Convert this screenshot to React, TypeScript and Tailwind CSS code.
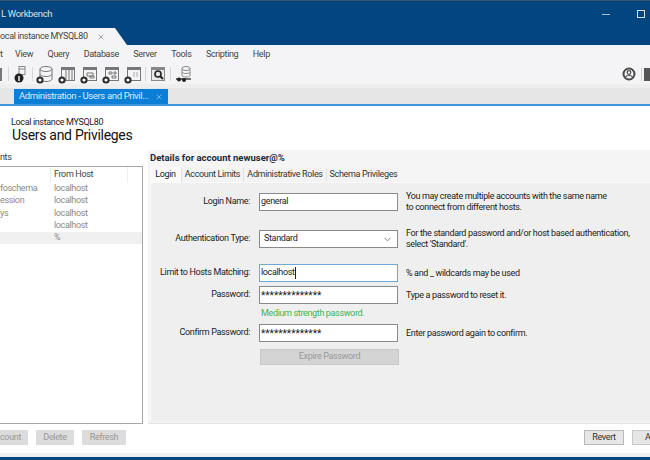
import { ReactNode } from "react";
import { X, ChevronDown } from "lucide-react";

const menus = ["View", "Query", "Database", "Server", "Tools", "Scripting", "Help"];

const users = [
  { name: "foschema", host: "localhost" },
  { name: "ession", host: "localhost" },
  { name: "ys", host: "localhost" },
  { name: "", host: "localhost" },
  { name: "", host: "%", selected: true },
];

const detailTabs = [
  { label: "Account Limits", width: "w-[62px]" },
  { label: "Administrative Roles", width: "w-[83px]" },
  { label: "Schema Privileges", width: "w-[74px]" },
];

function Dot() {
  return <circle cx="4" cy="16" r="2.6" fill="#fff" stroke="#2b2b2b" strokeWidth="2" />;
}

function DbIcon() {
  return (
    <svg width="18" height="20" viewBox="0 0 18 20" fill="none" stroke="#777">
      <ellipse cx="10" cy="5" rx="6" ry="2.5" />
      <path d="M4 5v10c0 1.500 3 2.500 6 2.500s6-1 6-2.500V5M4 10c0 1.500 3 2.500 6 2.500s6-1 6-2.500" />
      <Dot />
    </svg>
  );
}

function SheetIcon({ children }: { children: ReactNode }) {
  return (
    <svg width="18" height="20" viewBox="0 0 18 20" fill="none" stroke="#777">
      <rect x="3.500" y="3.500" width="13" height="13" fill="#f4f4f6" />
      <path d="M3.500 5h13" strokeWidth="2" />
      {children}
      <Dot />
    </svg>
  );
}

function Sep() {
  return <div className="w-px h-[14px] bg-[#d6d6d6]" />;
}

function Toolbar() {
  return (
    <div className="h-[20px] flex items-center">
      <div className="w-[2px] h-[13px] bg-[#777] mr-[6px]" />
      <Sep />
      <svg className="ml-[4px]" width="16" height="20" viewBox="0 0 16 20" fill="none" stroke="#888">
        <rect x="6" y="2.500" width="6" height="8" />
        <path d="M6 5h6" />
        <circle cx="6" cy="14" r="4.500" fill="#222" stroke="none" />
        <path d="M6 12v5" stroke="#fff" strokeWidth="1.400" />
      </svg>
      <div className="ml-[3px]"><Sep /></div>
      <div className="ml-[3px]"><DbIcon /></div>
      <div className="ml-[4px]">
        <SheetIcon><path d="M8 6v10M11 6v10M14 6v10" /></SheetIcon>
      </div>
      <div className="ml-[4px]">
        <SheetIcon><path d="M7 9h6v3H7zM10 12h4v2h-4z" /></SheetIcon>
      </div>
      <div className="ml-[4px]">
        <SheetIcon><path d="M7 8h3v2H7zM12 8h2v2h-2zM10 12h4v2h-4z" /></SheetIcon>
      </div>
      <div className="ml-[4px]">
        <SheetIcon><path d="M10 8v5M13 8v5" stroke="#aaa" /></SheetIcon>
      </div>
      <div className="ml-[3px]"><Sep /></div>
      <svg className="ml-[3px]" width="18" height="20" viewBox="0 0 18 20" fill="none" stroke="#888">
        <rect x="2.500" y="3.500" width="13" height="13" fill="#e8e8e8" />
        <path d="M2.500 5h13" strokeWidth="2" />
        <circle cx="9" cy="10" r="3" stroke="#222" strokeWidth="1.600" />
        <path d="M11 12l3 3" stroke="#222" strokeWidth="2" />
      </svg>
      <div className="ml-[3px]"><Sep /></div>
      <svg className="ml-[3px]" width="20" height="20" viewBox="0 0 20 20" fill="none" stroke="#888">
        <ellipse cx="12" cy="4.500" rx="4" ry="2" />
        <path d="M8 4.500v7c0 1 2 1.500 4 1.500s4-.5 4-1.500v-7M8 8c0 1 2 1.500 4 1.500s4-.5 4-1.500" />
        <path d="M2 15h15" stroke="#333" strokeWidth="1.400" />
        <circle cx="5" cy="15.500" r="2" fill="#222" stroke="none" />
        <circle cx="10" cy="16" r="2" fill="#222" stroke="none" />
      </svg>
      <div className="ml-auto flex items-center">
        <svg width="14" height="14" viewBox="0 0 14 14" fill="none">
          <circle cx="7" cy="7" r="5.500" stroke="#4a4a4a" strokeWidth="2" />
          <circle cx="7" cy="5.500" r="1.800" stroke="#4a4a4a" strokeWidth="1.200" />
          <path d="M3.500 10c1-2 6-2 7 0" stroke="#4a4a4a" strokeWidth="1.200" />
        </svg>
        <div className="ml-[5px] w-px h-[13px] bg-[#d0d0d0]" />
        <div className="ml-[2px] w-[6px] h-[13px] bg-[#555]" />
      </div>
    </div>
  );
}

function FormRow({ label, children, help, className }: { label?: string; children: ReactNode; help?: ReactNode; className?: string }) {
  return (
    <div className={`flex items-center ${className ?? ""}`}>
      <div className="w-[99px] shrink-0 text-right text-[#222]">{label}</div>
      <div className="w-[139px] shrink-0 ml-[9px]">{children}</div>
      <div className="ml-[8px] shrink-0 text-[#222] leading-[11px]">{help}</div>
    </div>
  );
}

function Field({ value, focused, masked }: { value: string; focused?: boolean; masked?: boolean }) {
  return (
    <div className={`h-[18px] bg-white border px-[1px] flex items-center text-[#222] ${focused ? "border-[#6fa8d6]" : "border-[#8a8a8a]"} ${masked ? "text-[10px] tracking-normal" : ""}`}>
      {value}
      {focused && <span className="w-px h-[12px] bg-[#222]" />}
    </div>
  );
}

export default function App() {
  return (
    <div className="w-[650px] h-[460px] overflow-hidden flex flex-col bg-white text-[9px] tracking-[-0.35px] font-['Roboto','Liberation_Sans',sans-serif] whitespace-nowrap">
      <div className="h-[27px] shrink-0 bg-[#03457f] border-t border-[#39546f] flex items-center text-[#d6e2ee] text-[9.5px] pl-[1px]">
        L Workbench
        <div className="ml-auto w-[8px] h-px bg-[#a9c0d6]" />
        <div className="ml-[27px] mr-[5px] w-[8px] h-[8px] border border-[#d6e2ee]" />
      </div>
      <div className="h-[18px] shrink-0 bg-[#03457f] flex items-end">
        <div className="w-[127px] h-[17px] bg-[#f4f4f6] [clip-path:polygon(0_0,115px_0,127px_100%,0_100%)] flex items-center text-[#444]">
          ocal instance MYSQL80
          <X size={8} className="ml-[9px] text-[#777]" />
        </div>
      </div>
      <div className="h-[19px] shrink-0 bg-[#f4f4f6] flex items-center text-[#444]">
        <span className="w-[15px]">t</span>
        <div className="flex gap-[14.5px]">
          {menus.map((m) => (
            <span key={m}>{m}</span>
          ))}
        </div>
      </div>
      <div className="shrink-0 bg-[#f4f4f6]">
        <Toolbar />
      </div>
      <div className="h-[22px] shrink-0 bg-[#e6e6e6] border-t-[4px] border-[#eeeeee] border-b-[2px] border-b-[#3d94d9] flex items-end pl-[14px]">
        <div className="w-[154px] h-[15px] bg-[#0b7fd6] text-[#d8ecfb] text-[9.5px] flex items-center pl-[5px]">
          Administration - Users and Privil...
          <X size={8} className="ml-auto mr-[5px] text-[#a8d0f0]" />
        </div>
      </div>
      <div className="shrink-0 h-[44px] pl-[11px] pt-[10px]">
        <div className="leading-[12px] text-[#222]">Local instance MYSQL80</div>
        <div className="leading-[15px] text-[14px] tracking-[-0.3px] text-[#111] pl-[1px]">Users and Privileges</div>
      </div>
      <div className="flex-1 flex min-h-0">
        <div className="w-[143px] shrink-0 flex flex-col">
          <div className="h-[16px] flex items-center text-[#333]">nts</div>
          <div className="h-[258px] border border-l-0 border-[#a6a6a6] flex flex-col">
            <div className="h-[15.5px] shrink-0 flex items-center">
              <div className="w-[50px] h-full" />
              <div className="w-[78px] h-full border-l border-r border-[#eeeeee] pl-[3px] flex items-center text-[#444]">From Host</div>
            </div>
            {users.map((u, i) => (
              <div key={i} className={`h-[12.3px] flex items-center text-[#8a8a8a] ${u.selected ? "bg-[#f0f0f0]" : ""}`}>
                <div className="w-[54px]">{u.name}</div>
                <div>{u.host}</div>
              </div>
            ))}
          </div>
          <div className="flex mt-[6px] gap-[8px] text-[#999]">
            <div className="w-[28px] h-[15px] bg-[#dcdcdc] text-right pr-[8px] leading-[15px]">count</div>
            <div className="w-[38px] h-[15px] bg-[#dcdcdc] text-center leading-[15px]">Delete</div>
            <div className="w-[44px] h-[15px] bg-[#dcdcdc] text-center leading-[15px]">Refresh</div>
          </div>
        </div>
        <div className="flex-1 ml-[5px] flex flex-col min-w-0">
          <div className="h-[274px] shrink-0 bg-[#f5f5f5] border-b border-[#e4e4e4] flex flex-col">
            <div className="h-[17px] shrink-0 pl-[2px] flex items-center font-bold text-[#1c2a3a] text-[9.5px] tracking-normal">Details for account newuser@%</div>
            <div className="h-[15px] shrink-0 pl-[2px] flex items-end text-[#333]">
              <div className="w-[31px] h-[15px] bg-[#fafafa] flex items-center justify-center text-[#222]">Login</div>
              {detailTabs.map((t) => (
                <div key={t.label} className={`${t.width} h-[14px] flex items-center justify-center border-l border-[#e2e2e2] bg-[#f3f3f3]`}>{t.label}</div>
              ))}
            </div>
            <div className="flex-1 ml-[2px] mb-[1px] bg-[#efefef] border-l border-t border-[#fafafa] pt-[8px]">
              <FormRow
                label="Login Name:"
                help={
                  <>
                    You may create multiple accounts with the same name
                    <br />
                    to connect from different hosts.
                  </>
                }
              >
                <Field value="general" />
              </FormRow>
              <FormRow
                className="mt-[15px]"
                label="Authentication Type:"
                help={
                  <>
                    For the standard password and/or host based authentication,
                    <br />
                    select 'Standard'.
                  </>
                }
              >
                <div className="h-[18px] bg-white border border-[#8a8a8a] px-[4px] flex items-center justify-between text-[#222]">
                  Standard
                  <ChevronDown size={11} className="text-[#777]" />
                </div>
              </FormRow>
              <FormRow className="mt-[14px]" label="Limit to Hosts Matching:" help="% and _ wildcards may be used">
                <Field value="localhost" focused />
              </FormRow>
              <FormRow className="mt-[4px]" label="Password:" help="Type a password to reset it.">
                <Field value="**************" masked />
              </FormRow>
              <div className="ml-[110px] mt-[4px] h-[12px] flex items-center text-[#3fb34f]">Medium strength password.</div>
              <FormRow className="mt-[4px]" label="Confirm Password:" help="Enter password again to confirm.">
                <Field value="**************" masked />
              </FormRow>
              <div className="ml-[109px] mt-[7px] w-[139px] h-[16px] bg-[#d4d4d4] border border-[#c8c8c8] flex items-center justify-center text-[#999]">Expire Password</div>
            </div>
          </div>
          <div className="flex mt-[6px] pl-[436px] gap-[8px] text-[#333]">
            <div className="w-[40px] h-[15px] shrink-0 bg-[#e6e6e6] border border-[#b8b8b8] flex items-center justify-center">Revert</div>
            <div className="w-[18px] h-[15px] shrink-0 bg-[#e6e6e6] border border-r-0 border-[#c8c8c8] pl-[12px] flex items-center">A</div>
          </div>
        </div>
      </div>
      <div className="h-[4px] shrink-0 bg-[#f0f0f0]" />
      <div className="h-[3px] shrink-0 bg-[#03457f]" />
    </div>
  );
}
